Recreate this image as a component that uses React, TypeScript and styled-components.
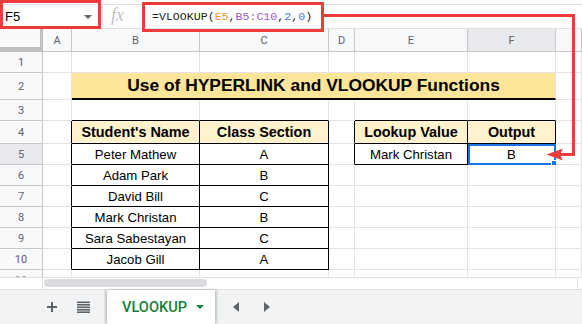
import React from 'react';
import styled, { createGlobalStyle } from 'styled-components';

const GlobalStyle = createGlobalStyle`
  html, body {
    margin: 0;
    padding: 0;
    background: #fff;
    overflow: hidden;
  }
`;

const RED = '#ec3b3b';
const GRID = '#e2e3e3';
const HEAD_LINE = '#c7c7c7';
const BLACK = '#000';
const CREAM = '#fff2cc';
const TITLE_BG = '#ffe599';

const Page = styled.div`
  position: relative;
  width: 582px;
  height: 324px;
  display: flex;
  flex-direction: column;
  overflow: hidden;
  font-family: Roboto, 'Liberation Sans', Arial, sans-serif;
`;

/* ---------- formula bar ---------- */

const FormulaBar = styled.div`
  height: 29px;
  box-sizing: border-box;
  border-bottom: 1px solid #e0e0e0;
  display: flex;
  padding-top: 4px;
`;

const FormulaRow = styled.div`
  flex: 1;
  display: flex;
  align-items: center;
  border-top: 1px solid #e0e0e0;
`;

const NameBox = styled.div`
  width: 103px;
  height: 100%;
  box-sizing: border-box;
  border-right: 1px solid #e0e0e0;
  display: flex;
  align-items: center;
  justify-content: space-between;
  padding: 0 10px 0 5px;
  font-family: 'Liberation Sans', Arial, sans-serif;
  font-size: 13px;
  color: #000;
`;

const Caret = styled.span<{ $color?: string }>`
  width: 0;
  height: 0;
  border-left: 4px solid transparent;
  border-right: 4px solid transparent;
  border-top: 4px solid ${p => p.$color ?? '#5f6368'};
`;

const FxLabel = styled.div`
  width: 40px;
  padding-left: 8px;
  box-sizing: border-box;
  font-family: 'Liberation Serif', serif;
  font-style: italic;
  font-size: 18px;
  color: #bdc1c6;
  margin-top: -2px;
`;

const FormulaText = styled.div`
  padding-left: 9px;
  font-family: 'Liberation Mono', monospace;
  font-size: 11.6px;
  color: #202124;
  white-space: nowrap;
`;

const Token = styled.span<{ $color: string }>`
  color: ${p => p.$color};
`;

/* ---------- sheet grid ---------- */

const Sheet = styled.div`
  display: grid;
  grid-template-columns: 43px 29px 128px 129px 26px 113px 88px 1fr;
  grid-template-rows: 23px 21px 27px 21px 23px 21px 21px 21px 21px 21px 21px 7px;
  overflow: hidden;
`;

const Corner = styled.div`
  box-sizing: border-box;
  background: #f8f9fa;
  border-right: 3px solid #bfbfbf;
  border-bottom: 5px solid #bfbfbf;
`;

const ColHead = styled.div<{ $active?: boolean }>`
  box-sizing: border-box;
  display: flex;
  align-items: center;
  justify-content: center;
  background: ${p => (p.$active ? '#e8eaed' : '#f8f9fa')};
  border-right: 1px solid ${HEAD_LINE};
  border-bottom: 1px solid ${HEAD_LINE};
  font-size: 11px;
  color: #5f6368;
`;

const RowHead = styled.div<{ $active?: boolean; $clip?: boolean }>`
  box-sizing: border-box;
  display: flex;
  align-items: ${p => (p.$clip ? 'flex-start' : 'center')};
  justify-content: center;
  overflow: hidden;
  line-height: 21px;
  background: ${p => (p.$active ? '#e8eaed' : '#f8f9fa')};
  border-right: 1px solid ${HEAD_LINE};
  border-bottom: ${p => (p.$clip ? 0 : 1)}px solid ${HEAD_LINE};
  font-size: 11px;
  color: #5f6368;
`;

const Cell = styled.div<{
  $right: string;
  $bottom: string;
  $bottomW?: number;
  $bg?: string;
  $bold?: boolean;
  $size?: number;
  $span?: number;
}>`
  position: relative;
  box-sizing: border-box;
  display: flex;
  align-items: center;
  justify-content: center;
  grid-column: span ${p => p.$span ?? 1};
  background: ${p => p.$bg ?? '#fff'};
  border-right: 1px solid ${p => p.$right};
  border-bottom: ${p => p.$bottomW ?? 1}px solid ${p => p.$bottom};
  font-family: 'Liberation Sans', Arial, sans-serif;
  font-weight: ${p => (p.$bold ? 700 : 400)};
  font-size: ${p => p.$size ?? 13.2}px;
  color: #000;
  white-space: nowrap;
`;

const Selection = styled.div`
  position: absolute;
  top: 0;
  left: 0;
  right: -1px;
  bottom: -1px;
  border: 2px solid #1a73e8;
  pointer-events: none;
`;

const Handle = styled.div`
  position: absolute;
  right: -5px;
  bottom: -5px;
  width: 6px;
  height: 6px;
  background: #1a73e8;
  border: 1px solid #fff;
`;

/* ---------- scroll + tabs ---------- */

const ScrollRow = styled.div`
  height: 13px;
  box-sizing: border-box;
  display: flex;
  border-top: 1px solid #e0e0e0;
  border-bottom: 1px solid #e0e0e0;
`;

const ScrollStub = styled.div`
  width: 43px;
  box-sizing: border-box;
  border-right: 1px solid #e0e0e0;
`;

const Track = styled.div`
  flex: 1;
  padding: 1px 0 0 1px;
`;

const Thumb = styled.div`
  width: 163px;
  height: 8px;
  border-radius: 4px;
  background: #dadce0;
`;

const ScrollEnd = styled.div`
  width: 4px;
  border-left: 1px solid #dadce0;
`;

const TabBar = styled.div`
  flex: 1;
  display: flex;
  align-items: stretch;
  background: #f1f3f4;
  padding-left: 37px;
`;

const IconButton = styled.div<{ $w: number }>`
  width: ${p => p.$w}px;
  display: flex;
  align-items: center;
  justify-content: center;
`;

const Tab = styled.div`
  width: 108px;
  margin-left: 8px;
  box-sizing: border-box;
  background: #fff;
  box-shadow: -2px 0 2px rgba(60, 64, 67, 0.25), 2px 0 2px rgba(60, 64, 67, 0.25);
  display: flex;
  align-items: center;
  padding-left: 15px;
  gap: 9px;
  font-family: Roboto, sans-serif;
  font-weight: 500;
  font-size: 14.6px;
  color: #188038;
`;

const NavGroup = styled.div`
  display: flex;
  margin-left: 6px;
  gap: 1px;
`;

const Highlight = styled.div<{ $x: number; $y: number; $w: number; $h: number }>`
  position: absolute;
  left: ${p => p.$x}px;
  top: ${p => p.$y}px;
  width: ${p => p.$w}px;
  height: ${p => p.$h}px;
  box-sizing: border-box;
  border: 3px solid ${RED};
  pointer-events: none;
`;

const Overlay = styled.svg`
  position: absolute;
  left: 0;
  top: 0;
  pointer-events: none;
`;

/* ---------- data ---------- */

const COL_LETTERS = ['A', 'B', 'C', 'D', 'E', 'F', ''];

const students: [string, string][] = [
  ['Peter Mathew', 'A'],
  ['Adam Park', 'B'],
  ['David Bill', 'C'],
  ['Mark Christan', 'B'],
  ['Sara Sabestayan', 'C'],
  ['Jacob Gill', 'A'],
];

type CellInfo = { text?: string; bold?: boolean; bg?: string };

const cellAt = (r: number, c: number): CellInfo => {
  if (r === 4) {
    const heads: Record<number, string> = {
      1: "Student's Name",
      2: 'Class Section',
      4: 'Lookup Value',
      5: 'Output',
    };
    if (heads[c]) return { text: heads[c], bold: true, bg: CREAM };
  }
  if (r >= 5 && r <= 10 && (c === 1 || c === 2)) {
    return { text: students[r - 5][c - 1] };
  }
  if (r === 5 && c === 4) return { text: 'Mark Christan' };
  if (r === 5 && c === 5) return { text: 'B' };
  return {};
};

const rightColor = (r: number, c: number) => {
  if (r >= 4 && r <= 10 && c >= 0 && c <= 2) return BLACK;
  if (r >= 4 && r <= 5 && c >= 3 && c <= 5) return BLACK;
  return GRID;
};

const bottomColor = (r: number, c: number) => {
  if (r >= 3 && r <= 10 && (c === 1 || c === 2)) return BLACK;
  if (r >= 3 && r <= 5 && (c === 4 || c === 5)) return BLACK;
  return GRID;
};

const ROWS = [1, 2, 3, 4, 5, 6, 7, 8, 9, 10, 11];

const SheetGrid = () => (
  <Sheet>
    <Corner />
    {COL_LETTERS.map((l, i) => (
      <ColHead key={'h' + i} $active={l === 'F'}>
        {l}
      </ColHead>
    ))}
    {ROWS.map(r => (
      <React.Fragment key={r}>
        <RowHead $active={r === 5} $clip={r === 11}>
          {r}
        </RowHead>
        {COL_LETTERS.map((_, c) => {
          if (r === 2 && c >= 2 && c <= 5) return null;
          if (r === 2 && c === 1) {
            return (
              <Cell
                key={c}
                $span={5}
                $right={GRID}
                $bottom={BLACK}
                $bottomW={2}
                $bg={TITLE_BG}
                $bold
                $size={17.4}
              >
                Use of HYPERLINK and VLOOKUP Functions
              </Cell>
            );
          }
          const info = cellAt(r, c);
          return (
            <Cell
              key={c}
              $right={rightColor(r, c)}
              $bottom={r === 11 ? 'transparent' : bottomColor(r, c)}
              $bg={info.bg}
              $bold={info.bold}
              $size={info.bold ? 14.4 : 13.2}
            >
              {info.text}
              {r === 5 && c === 5 ? (
                <Selection>
                  <Handle />
                </Selection>
              ) : null}
            </Cell>
          );
        })}
      </React.Fragment>
    ))}
  </Sheet>
);

const App = () => {
  return (
    <Page>
      <GlobalStyle />
      <FormulaBar>
        <FormulaRow>
          <NameBox>
            F5
            <Caret />
          </NameBox>
          <FxLabel>fx</FxLabel>
          <FormulaText>
            =VLOOKUP(<Token $color="#f09a1c">E5</Token>,<Token $color="#a05bc8">B5:C10</Token>,
            <Token $color="#3d7bd9">2</Token>,<Token $color="#3d7bd9">0</Token>)
          </FormulaText>
        </FormulaRow>
      </FormulaBar>

      <SheetGrid />

      <ScrollRow>
        <ScrollStub />
        <Track>
          <Thumb />
        </Track>
        <ScrollEnd />
      </ScrollRow>

      <TabBar>
        <IconButton $w={30}>
          <svg width="12" height="12" viewBox="0 0 12 12">
            <path d="M6 1v10M1 6h10" stroke="#5f6368" strokeWidth="2" />
          </svg>
        </IconButton>
        <IconButton $w={32}>
          <svg width="13" height="12" viewBox="0 0 13 12">
            <g fill="#5f6368">
              <rect x="0" y="0.5" width="13" height="1.6" />
              <rect x="0" y="3" width="13" height="1.6" />
              <rect x="0" y="5.5" width="13" height="1.6" />
              <rect x="0" y="8" width="13" height="1.6" />
              <rect x="0" y="10.4" width="13" height="1.6" />
            </g>
          </svg>
        </IconButton>
        <Tab>
          VLOOKUP
          <Caret $color="#188038" />
        </Tab>
        <NavGroup>
          <IconButton $w={30}>
            <svg width="6" height="10" viewBox="0 0 6 10">
              <path d="M6 0L0 5l6 5z" fill="#5f6368" />
            </svg>
          </IconButton>
          <IconButton $w={30}>
            <svg width="6" height="10" viewBox="0 0 6 10">
              <path d="M0 0l6 5-6 5z" fill="#5f6368" />
            </svg>
          </IconButton>
        </NavGroup>
      </TabBar>

      <Highlight $x={0} $y={0} $w={101} $h={29} />
      <Highlight $x={142} $y={2} $w={182} $h={30} />
      <Overlay width="582" height="324">
        <path
          d="M324 15.5H573.5V154.5H559"
          fill="none"
          stroke={RED}
          strokeWidth="3"
        />
        <path d="M546.5 154.5L563 148.5Q558.5 154.5 563 160.5Z" fill={RED} />
      </Overlay>
    </Page>
  );
};

export default App;
